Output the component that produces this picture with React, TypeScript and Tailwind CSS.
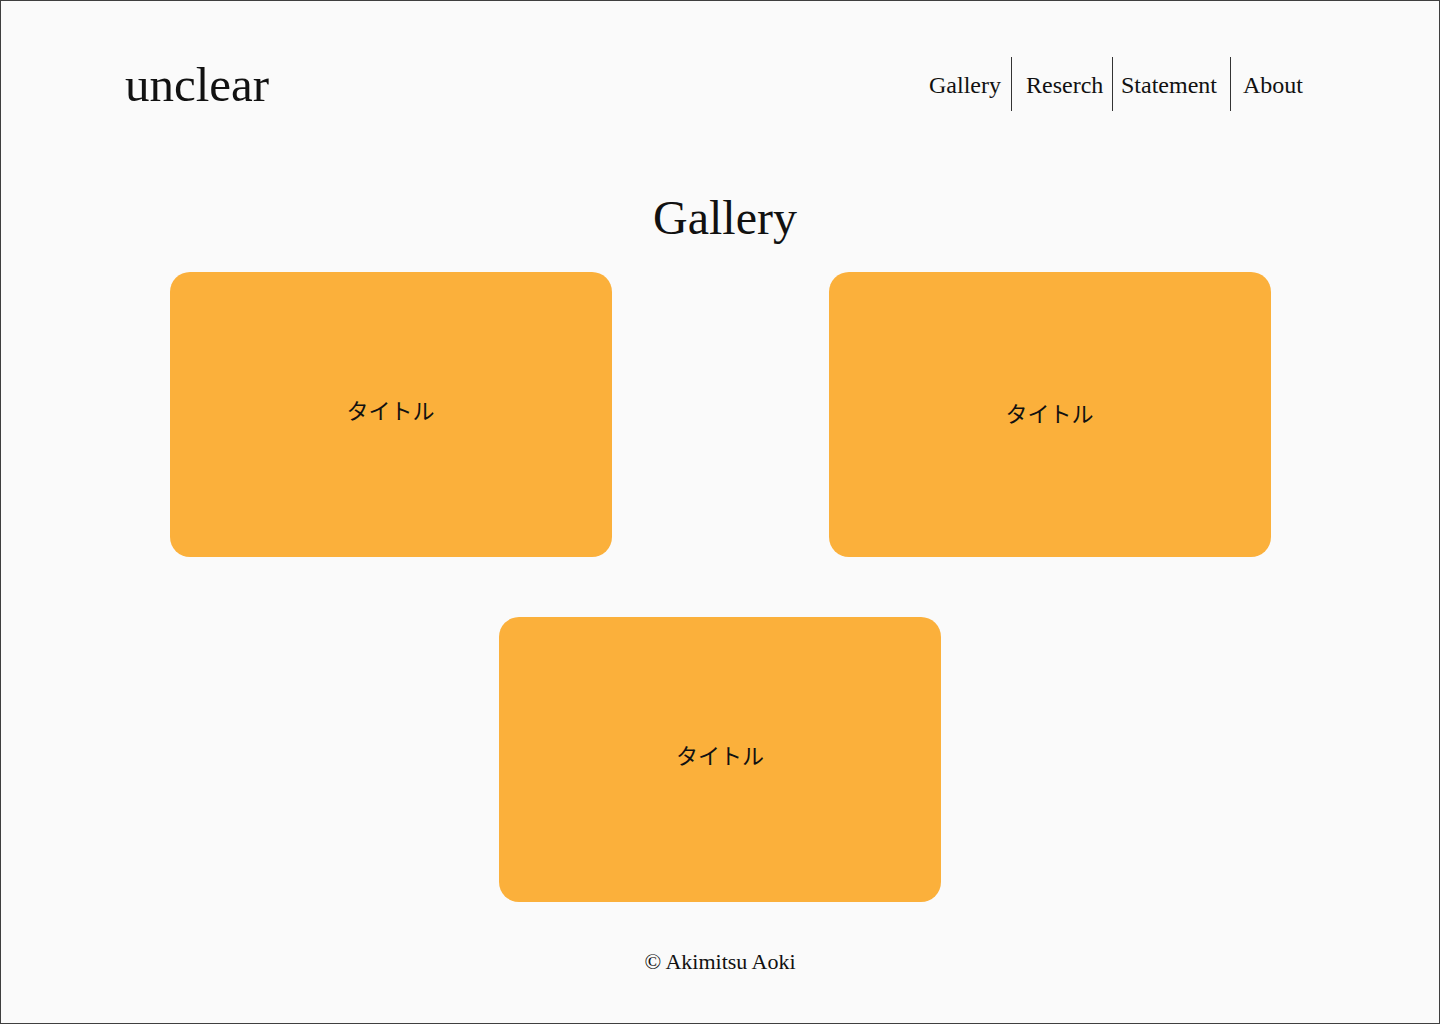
import React from "react";

const serif = { fontFamily: '"Liberation Serif", "Times New Roman", serif' };

function Card({ pad }: { pad: string }) {
  return (
    <div className={"w-[442px] h-[285px] rounded-[20px] bg-[#fbb03b] flex items-center justify-center " + pad}>
      <span
        className="text-[22px] text-[#111] leading-none"
        style={{ fontFamily: '"Noto Sans CJK JP", "Noto Sans", sans-serif' }}
      >
        タイトル
      </span>
    </div>
  );
}

export default function App() {
  const nav = [
    { n: "Gallery", c: "w-[94px] pl-[12px]" },
    { n: "Reserch", c: "w-[101px] pl-[14px] border-l border-[#333]" },
    { n: "Statement", c: "w-[118px] pl-[8px] border-l border-[#333]" },
    { n: "About", c: "w-[85px] pl-[12px] border-l border-[#333]" },
  ];
  return (
    <div
      className="w-[1440px] h-[1024px] border border-[#3f3f3f] bg-[#fafafa] text-[#111] flex flex-col"
      style={serif}
    >
      <header className="flex items-center justify-between pt-[56px] pl-[124px] pr-[124px]">
        <div className="text-[49px] leading-none h-[54px] flex items-center">unclear</div>
        <nav className="flex h-[54px]">
          {nav.map((it) => (
            <a key={it.n} className={"h-[54px] flex items-center pt-[2px] text-[24px] leading-none " + it.c}>
              {it.n}
            </a>
          ))}
        </nav>
      </header>
      <h1 className="mt-[83px] pl-[10px] text-center text-[48px] leading-none">Gallery</h1>
      <main className="mt-[30px] flex justify-center">
        <div className="w-[1101px] flex flex-wrap justify-center gap-x-[217px] gap-y-[60px]">
          <Card pad="pb-[12px]" />
          <Card pad="pb-[6px]" />
          <Card pad="pb-[12px]" />
        </div>
      </main>
      <footer className="mt-[49px] text-center text-[22px] leading-none">© Akimitsu Aoki</footer>
    </div>
  );
}
